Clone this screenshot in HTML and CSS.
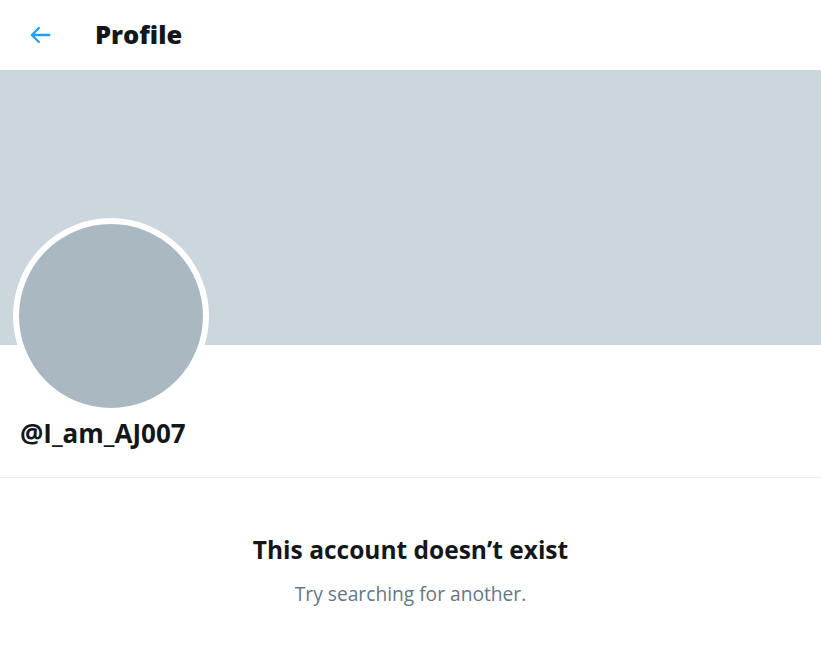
FILE: index.html
```html
<!DOCTYPE html>
<html lang="en">
<head>
<meta charset="utf-8">
<title>Profile</title>
<link rel="stylesheet" href="styles.css">
</head>
<body>
<div class="page">
  <header class="topbar">
    <button class="back" aria-label="Back">
      <svg viewBox="0 0 24 24" class="back-icon"><path d="M20 11H7.414l4.293-4.293c.39-.39.39-1.023 0-1.414s-1.023-.39-1.414 0l-6 6c-.39.39-.39 1.023 0 1.414l6 6c.195.195.45.293.707.293s.512-.098.707-.293c.39-.39.39-1.023 0-1.414L7.414 13H20c.553 0 1-.447 1-1s-.447-1-1-1z"/></svg>
    </button>
    <h1 class="title">Profile</h1>
  </header>
  <div class="banner"></div>
  <div class="info">
    <div class="avatar-row">
      <div class="avatar"></div>
    </div>
    <div class="handle">@I_am_AJ007</div>
  </div>
  <div class="empty">
    <div class="empty-title">This account doesn’t exist</div>
    <div class="empty-sub">Try searching for another.</div>
  </div>
</div>
</body>
</html>
```
FILE: styles.css
```css
* { box-sizing: border-box; }
html, body { margin: 0; padding: 0; background: #fff; }
body {
  font-family: "Open Sans", "Noto Sans", "Liberation Sans", sans-serif;
  color: #14171a;
}
.page { width: 821px; }
.topbar {
  height: 70px;
  display: flex;
  align-items: center;
  padding-left: 26px;
}
.back {
  border: 0;
  background: none;
  padding: 0;
  width: 28px;
  height: 28px;
  display: flex;
  margin-right: 41px;
}
.back-icon { width: 28px; height: 28px; fill: #1da1f2; }
.title {
  margin: 0;
  font-size: 25.5px;
  font-weight: 800;
  margin-top: -3px;
}
.banner {
  height: 275px;
  background: #ccd6dd;
}
.info {
  display: flex;
  flex-direction: column;
  padding: 0 20px;
  border-bottom: 1px solid #e6ecf0;
  height: 133px;
}
.avatar-row { height: 67px; display: flex; }
.avatar {
  flex: none;
  width: 196px;
  height: 196px;
  margin-left: -7px;
  margin-top: -127px;
  border-radius: 50%;
  background: #aab8c2;
  border: 6px solid #fff;
}
.handle {
  font-size: 26px;
  font-weight: 700;
  margin-top: 5px;
  line-height: 32px;
}
.empty {
  text-align: center;
  padding-top: 55px;
}
.empty-title {
  font-size: 24.5px;
  font-weight: 700;
  line-height: 34px;
}
.empty-sub {
  font-size: 19.2px;
  color: #657786;
  margin-top: 14px;
  line-height: 26px;
}
```
